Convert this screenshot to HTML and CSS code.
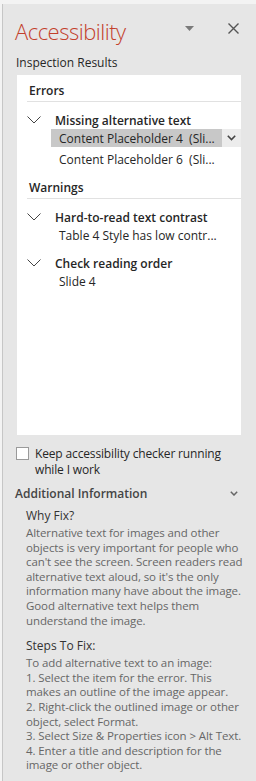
FILE: index.html
```html
<!DOCTYPE html>
<html>
<head>
<meta charset="utf-8">
<link rel="stylesheet" href="styles.css">
</head>
<body>
<div class="pane">
  <div class="header">
    <h1 class="title">Accessibility</h1>
    <div class="header-actions">
      <svg class="menu-caret" width="9" height="5" viewBox="0 0 9 5"><path d="M0 0H9L4.5 5Z" fill="#7a7a7a"/></svg>
      <svg class="close" width="11" height="11" viewBox="0 0 11 11"><path d="M0.5 0.5L10.5 10.5M10.5 0.5L0.5 10.5" stroke="#555" stroke-width="1.4"/></svg>
    </div>
  </div>
  <div class="subtitle">Inspection Results</div>
  <div class="results">
    <div class="group-title">Errors</div>
    <div class="issue">
      <div class="issue-head">
        <svg class="chev" width="14" height="8" viewBox="0 0 14 8"><path d="M0.5 0.5L7 7L13.5 0.5" fill="none" stroke="#444" stroke-width="1"/></svg>
        <span>Missing alternative text</span>
      </div>
      <div class="item selected"><span class="item-text">Content Placeholder 4&nbsp; (Sli...</span><span class="item-btn"><svg width="9" height="6" viewBox="0 0 9 6"><path d="M0.8 0.8L4.5 4.5L8.2 0.8" fill="none" stroke="#444" stroke-width="1.6"/></svg></span></div>
      <div class="item"><span class="item-text">Content Placeholder 6&nbsp; (Sli...</span></div>
    </div>
    <div class="group-title">Warnings</div>
    <div class="issue">
      <div class="issue-head">
        <svg class="chev" width="14" height="8" viewBox="0 0 14 8"><path d="M0.5 0.5L7 7L13.5 0.5" fill="none" stroke="#444" stroke-width="1"/></svg>
        <span>Hard-to-read text contrast</span>
      </div>
      <div class="item"><span class="item-text">Table 4 Style has low contr...</span></div>
    </div>
    <div class="issue">
      <div class="issue-head">
        <svg class="chev" width="14" height="8" viewBox="0 0 14 8"><path d="M0.5 0.5L7 7L13.5 0.5" fill="none" stroke="#444" stroke-width="1"/></svg>
        <span>Check reading order</span>
      </div>
      <div class="item"><span class="item-text">Slide 4</span></div>
    </div>
  </div>
  <label class="keep">
    <span class="checkbox"></span>
    <span class="keep-text">Keep accessibility checker running while I work</span>
  </label>
  <div class="info-head">
    <span>Additional Information</span>
    <svg width="8" height="5" viewBox="0 0 8 5"><path d="M0.8 0.8L4 4L7.2 0.8" fill="none" stroke="#666" stroke-width="1.5"/></svg>
  </div>
  <div class="info">
    <div class="info-title">Why Fix?</div>
    <p class="info-text">Alternative text for images and other<br>objects is very important for people who<br>can't see the screen. Screen readers read<br>alternative text aloud, so it's the only<br>information many have about the image.<br>Good alternative text helps them<br>understand the image.</p>
    <div class="info-title steps">Steps To Fix:</div>
    <p class="info-text">To add alternative text to an image:<br>1. Select the item for the error. This<br>makes an outline of the image appear.<br>2. Right-click the outlined image or other<br>object, select Format.<br>3. Select Size &amp; Properties icon &gt; Alt Text.<br>4. Enter a title and description for the<br>image or other object.</p>
  </div>
</div>
</body>
</html>
```

FILE: styles.css
```css
html, body {
  margin: 0;
  padding: 0;
}
body {
  background: #f3f3f3;
  width: 256px;
  height: 781px;
  overflow: hidden;
  font-family: "Segoe UI", "Open Sans", "Noto Sans", sans-serif;
  font-size: 12px;
  color: #262626;
}
.pane {
  margin: 4px 0 0 2px;
  border-left: 1px solid #c6c6c6;
  background: #e6e6e6;
  height: 777px;
  padding-left: 12px;
  box-sizing: border-box;
}
.header {
  display: flex;
  align-items: center;
  justify-content: space-between;
  height: 46px;
  padding-right: 17px;
}
.title {
  margin: 0;
  font-weight: 300;
  font-size: 22px;
  color: #c3402b;
  letter-spacing: -0.5px;
  padding-top: 8px;
}
.header-actions {
  display: flex;
  align-items: center;
  gap: 34px;
  padding-top: 2px;
}
.subtitle {
  padding-left: 1px;
  margin-top: 5px;
  height: 16px;
  line-height: 16px;
  font-size: 12px;
}
.results {
  background: #fff;
  margin: 4px 0 0 2px;
  width: 224px;
  height: 360px;
  padding: 6px 0 0 10px;
  box-sizing: border-box;
}
.group-title {
  font-weight: 600;
  height: 20px;
  line-height: 20px;
  border-bottom: 1px solid #e1e1e1;
  padding-left: 2px;
  margin-bottom: 9px;
}
.issue {
  margin-bottom: 10px;
}
.issue + .group-title {
  margin-top: 2px;
}
.issue-head {
  display: flex;
  align-items: center;
  height: 18px;
  font-weight: 600;
}
.chev {
  margin: 0 14px 0 0;
}
.item {
  display: flex;
  align-items: center;
  height: 18px;
  margin-left: 24px;
}
.item + .item {
  margin-top: 3px;
}
.item-text {
  padding-left: 8px;
  flex: 1;
}
.item.selected {
  background: #c8c8c8;
}
.item-btn {
  width: 19px;
  height: 18px;
  background: #ececec;
  display: flex;
  align-items: center;
  justify-content: center;
}
.keep {
  display: flex;
  gap: 6px;
  margin-top: 11px;
  padding-left: 1px;
  line-height: 16px;
}
.keep-text {
  width: 215px;
  letter-spacing: -0.15px;
}
.checkbox {
  flex: none;
  width: 11px;
  height: 11px;
  border: 1px solid #9a9a9a;
  background: #fff;
  margin-top: 1px;
}
.info-head {
  display: flex;
  align-items: center;
  justify-content: space-between;
  padding-right: 18px;
  margin-top: 6px;
  font-weight: 600;
  color: #444;
  height: 18px;
}
.info {
  padding-left: 11px;
  margin-top: 6px;
}
.info-title {
  color: #333;
  line-height: 16px;
}
.info-title.steps {
  margin-top: 10px;
}
.info-text {
  margin: 2px 0 0;
  white-space: nowrap;
  color: #666;
  line-height: 14.6px;
  font-size: 11.5px;
  letter-spacing: -0.1px;
}
```
